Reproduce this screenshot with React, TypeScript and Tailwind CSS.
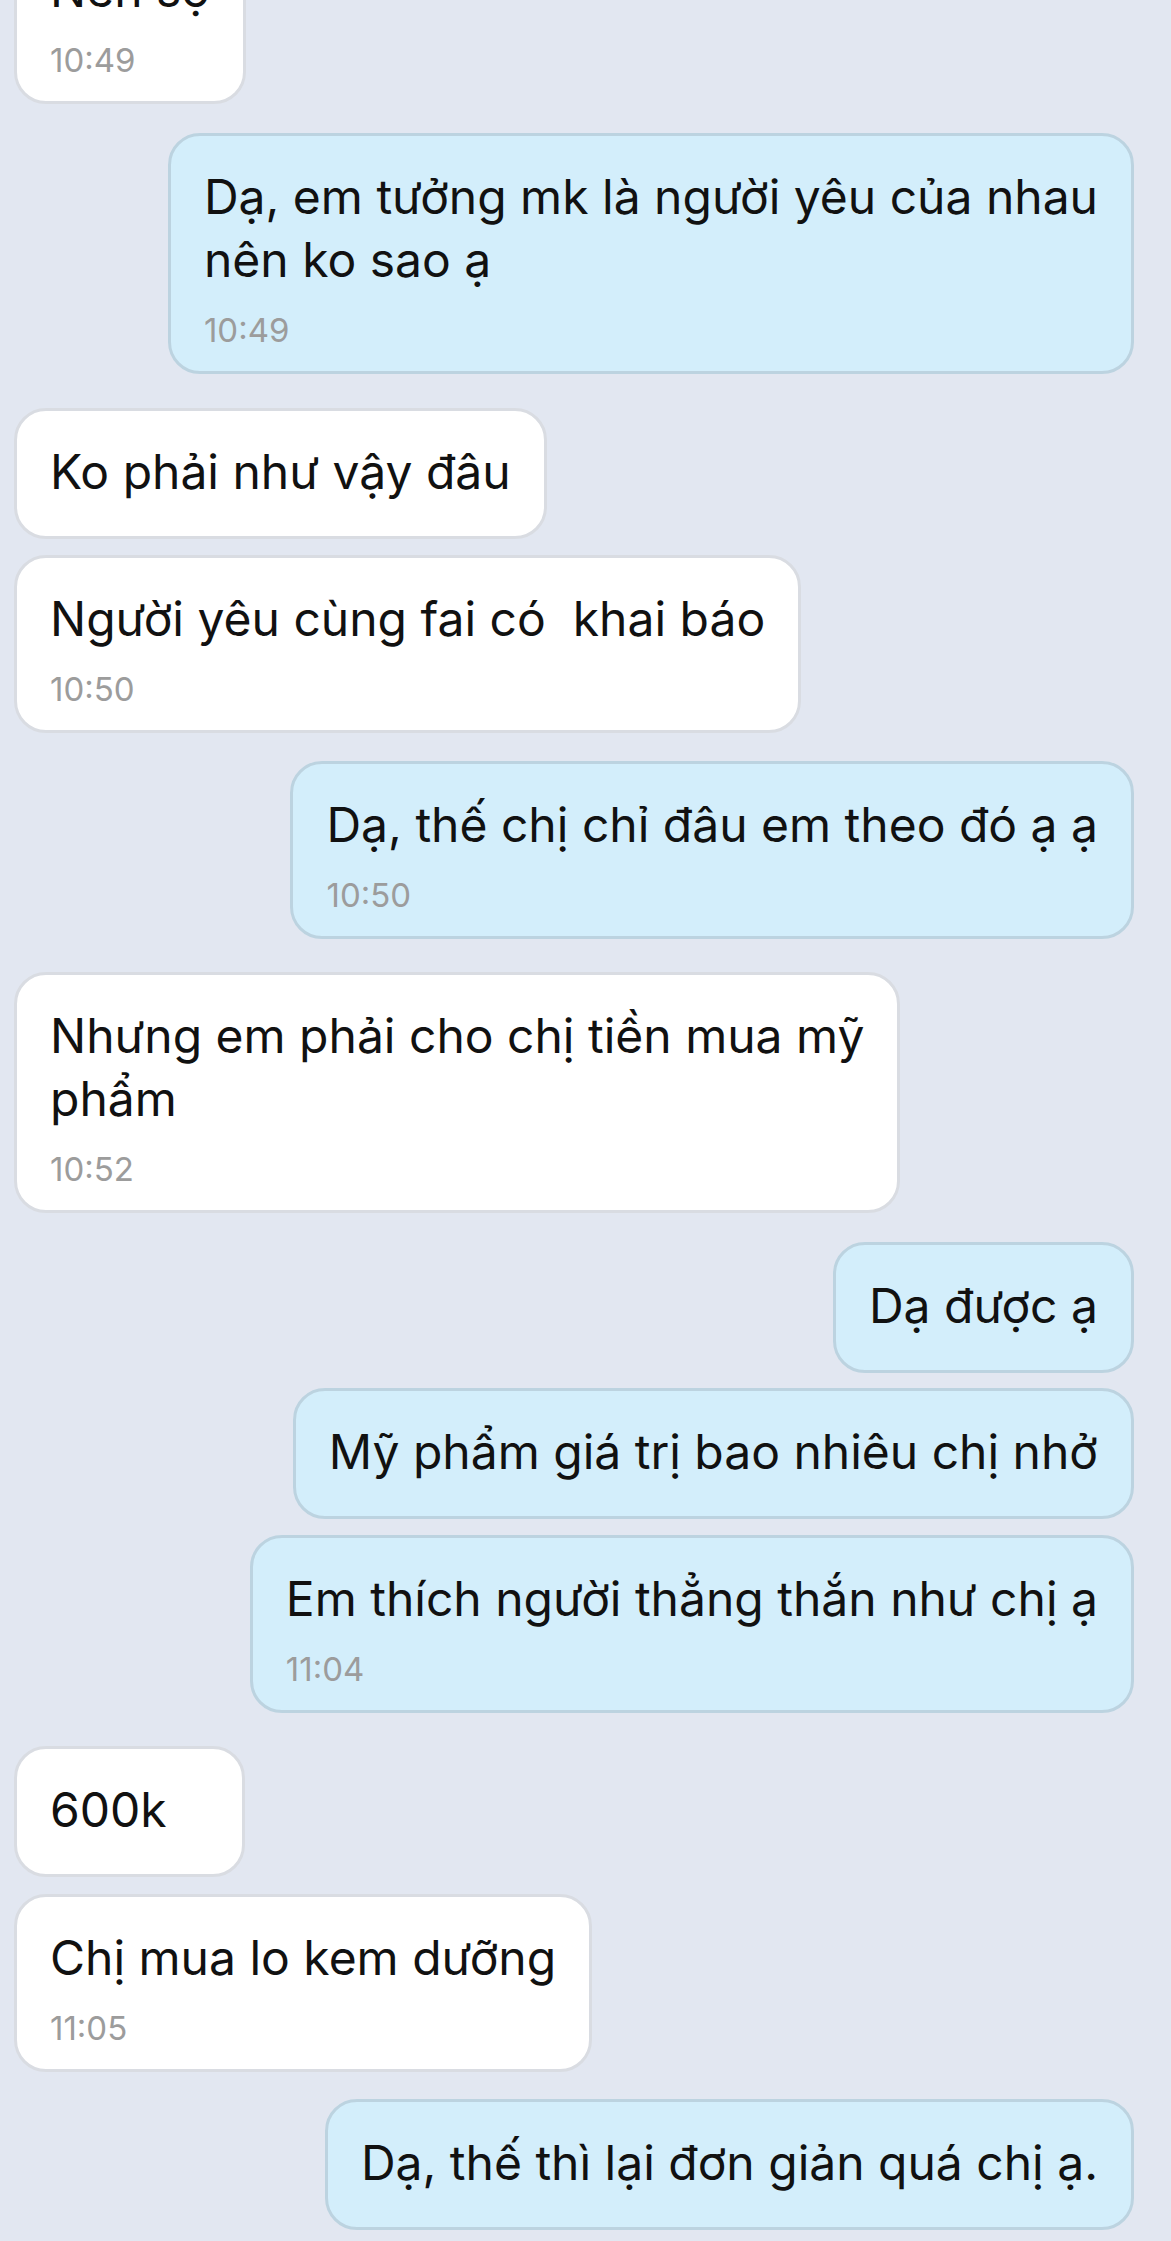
type Msg = {
  side: 'in' | 'out'
  lines: string[]
  time?: string
  gap: string
}

const MESSAGES: Msg[] = [
  { side: 'in', lines: ['Nên sợ'], time: '10:49', gap: '' },
  { side: 'out', lines: ['Dạ, em tưởng mk là người yêu của nhau', 'nên ko sao ạ'], time: '10:49', gap: 'mt-[29px]' },
  { side: 'in', lines: ['Ko phải như vậy đâu'], gap: 'mt-[34px]' },
  { side: 'in', lines: ['Người yêu cùng fai có  khai báo'], time: '10:50', gap: 'mt-[16px]' },
  { side: 'out', lines: ['Dạ, thế chị chỉ đâu em theo đó ạ ạ'], time: '10:50', gap: 'mt-[28px]' },
  { side: 'in', lines: ['Nhưng em phải cho chị tiền mua mỹ', 'phẩm'], time: '10:52', gap: 'mt-[33px]' },
  { side: 'out', lines: ['Dạ được ạ'], gap: 'mt-[29px]' },
  { side: 'out', lines: ['Mỹ phẩm giá trị bao nhiêu chị nhở'], gap: 'mt-[15px]' },
  { side: 'out', lines: ['Em thích người thẳng thắn như chị ạ'], time: '11:04', gap: 'mt-[16px]' },
  { side: 'in', lines: ['600k'], gap: 'mt-[33px]' },
  { side: 'in', lines: ['Chị mua lo kem dưỡng'], time: '11:05', gap: 'mt-[17px]' },
  { side: 'out', lines: ['Dạ, thế thì lại đơn giản quá chị ạ.'], gap: 'mt-[27px]' },
]

function Bubble({ msg }: { msg: Msg }) {
  const isOut = msg.side === 'out'
  return (
    <div className={`flex ${isOut ? 'justify-end' : 'justify-start'} ${msg.gap}`}>
      <div
        className={`min-w-[231px] rounded-[32px] border-[3px] px-[33px] pt-[29px] ${msg.time ? 'pb-[21px]' : 'pb-[33px]'} ${
          isOut ? 'bg-[#d3eefb] border-[#bcd3e0]' : 'bg-white border-[#d9dce2]'
        }`}
      >
        {msg.lines.map((line, i) => (
          <div key={i} className="whitespace-pre text-[48px] leading-[63px] text-[#111111]">
            {line}
          </div>
        ))}
        {msg.time && (
          <div className="mt-[19px] text-[33px] leading-[40px] text-[#9c9c9c]">{msg.time}</div>
        )}
      </div>
    </div>
  )
}

export default function App() {
  return (
    <div
      className="h-[2241px] w-full overflow-hidden bg-[#e2e7f1]"
      style={{ fontFamily: 'Inter, "Noto Sans", "Liberation Sans", sans-serif' }}
    >
      <div className="mt-[-74px] pl-[14px] pr-[37px]">
        {MESSAGES.map((m, i) => (
          <Bubble key={i} msg={m} />
        ))}
      </div>
    </div>
  )
}
